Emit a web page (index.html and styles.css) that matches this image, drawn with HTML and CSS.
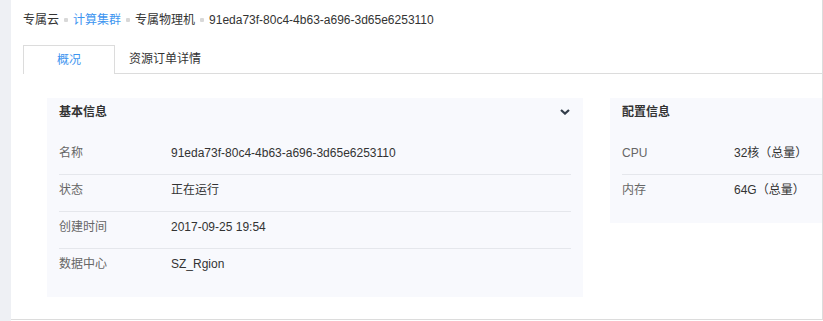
FILE: index.html
```html
<!DOCTYPE html>
<html lang="zh">
<head>
<meta charset="utf-8">
<link rel="stylesheet" href="styles.css">
</head>
<body>
<div class="side"></div>
<div class="main">
  <div class="crumb">
    <span class="crumb-item">专属云</span><span class="sep"></span><span class="crumb-item link">计算集群</span><span class="sep"></span><span class="crumb-item">专属物理机</span><span class="sep"></span><span class="crumb-item">91eda73f-80c4-4b63-a696-3d65e6253110</span>
  </div>
  <div class="tabs">
    <div class="tab active">概况</div>
    <div class="tab">资源订单详情</div>
  </div>
  <div class="cards">
    <div class="card">
      <div class="card-title"><span>基本信息</span>
        <svg class="chev" width="10" height="6" viewBox="0 0 10 6"><path d="M1 1 L5 4.6 L9 1" fill="none" stroke="#333d4a" stroke-width="2.2"/></svg>
      </div>
      <div class="row"><span class="label">名称</span><span class="value">91eda73f-80c4-4b63-a696-3d65e6253110</span></div>
      <div class="row"><span class="label">状态</span><span class="value">正在运行</span></div>
      <div class="row"><span class="label">创建时间</span><span class="value">2017-09-25 19:54</span></div>
      <div class="row"><span class="label">数据中心</span><span class="value">SZ_Rgion</span></div>
    </div>
    <div class="card">
      <div class="card-title"><span>配置信息</span></div>
      <div class="row"><span class="label">CPU</span><span class="value">32核（总量）</span></div>
      <div class="row"><span class="label">内存</span><span class="value">64G（总量）</span></div>
    </div>
  </div>
</div>
</body>
</html>
```
FILE: styles.css
```css
html, body {
  margin: 0;
  padding: 0;
}
body {
  width: 823px;
  height: 321px;
  display: flex;
  font-family: "Liberation Sans", "Noto Sans CJK SC", sans-serif;
  font-size: 12px;
  color: #333;
  background: #fff;
  overflow: hidden;
}
.side {
  width: 11px;
  flex-shrink: 0;
  background: #eef0f4;
}
.main {
  flex: 1;
  min-width: 0;
  height: 320px;
  border-right: 1px solid #dcdcdc;
  border-bottom: 1px solid #dcdcdc;
  padding-left: 12px;
  overflow: hidden;
  box-sizing: border-box;
}
.crumb {
  height: 45px;
  white-space: nowrap;
  display: flex;
  align-items: flex-start;
}
.crumb-item {
  line-height: 40px;
}
.link {
  color: #3d95f0;
}
.sep {
  width: 4px;
  height: 4px;
  border-radius: 1px;
  background: #d8d8d8;
  margin: 18px 5px 0;
}
.tabs {
  display: flex;
  height: 28px;
  border-bottom: 1px solid #dcdcdc;
}
.tab {
  height: 28px;
  line-height: 28px;
  padding: 0 14px;
  box-sizing: border-box;
  color: #333;
}
.tab.active {
  width: 92px;
  text-align: center;
  padding: 0;
  border: 1px solid #dcdcdc;
  border-bottom: none;
  height: 29px;
  background: #fff;
  color: #3d95f0;
}
.cards {
  display: flex;
  align-items: flex-start;
  gap: 27px;
  margin-top: 24px;
  margin-left: 24px;
}
.card {
  width: 536px;
  flex-shrink: 0;
  background: #f8f9fd;
  padding: 0 12px 11px;
  box-sizing: border-box;
}
.card-title {
  height: 40px;
  line-height: 28px;
  font-weight: bold;
  display: flex;
  justify-content: space-between;
  align-items: flex-start;
}
.chev {
  margin-top: 11px;
  margin-right: 1px;
}
.row {
  display: flex;
  height: 37px;
  line-height: 31px;
  border-bottom: 1px solid #e5e7ec;
  box-sizing: border-box;
}
.row:last-child {
  border-bottom: none;
  height: 37px;
}
.label {
  width: 112px;
  flex-shrink: 0;
  color: #666;
}
.value {
  color: #333;
}
```
